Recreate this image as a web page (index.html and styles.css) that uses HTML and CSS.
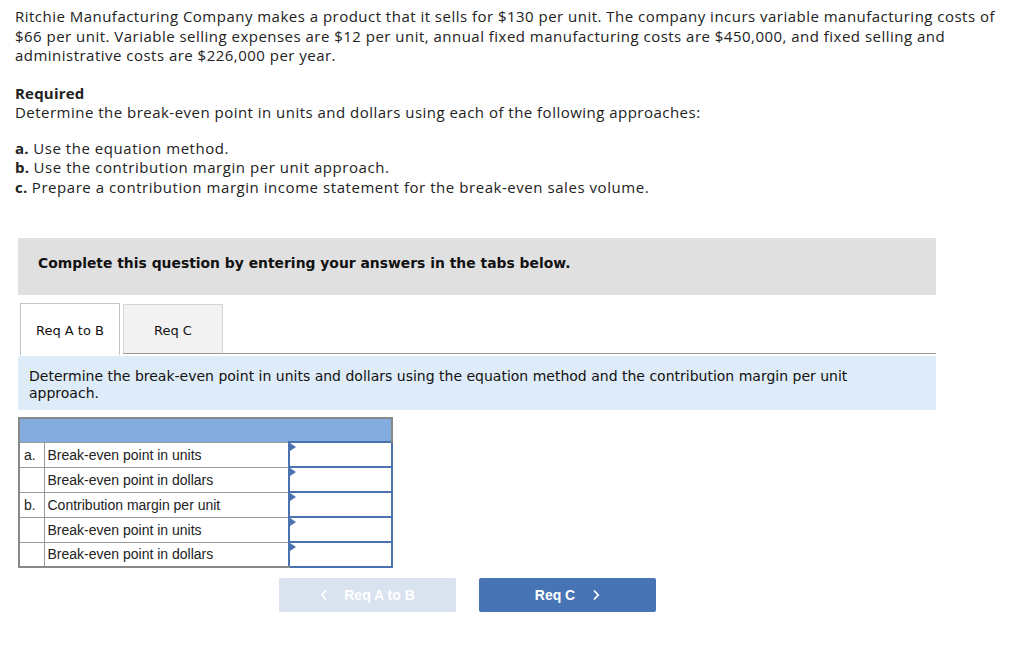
FILE: index.html
```html
<!DOCTYPE html>
<html>
<head>
<meta charset="utf-8">
<link rel="stylesheet" href="styles.css">
</head>
<body>
<div class="page">
  <p class="intro">Ritchie Manufacturing Company makes a product that it sells for $130 per unit. The company incurs variable manufacturing costs of $66 per unit. Variable selling expenses are $12 per unit, annual fixed manufacturing costs are $450,000, and fixed selling and administrative costs are $226,000 per year.</p>
  <p class="req"><b>Required</b><br>Determine the break-even point in units and dollars using each of the following approaches:</p>
  <p class="list"><b>a.</b> Use the equation method.<br><b>b.</b> Use the contribution margin per unit approach.<br><b>c.</b> Prepare a contribution margin income statement for the break-even sales volume.</p>

  <div class="banner">Complete this question by entering your answers in the tabs below.</div>

  <div class="tabs">
    <div class="tab active">Req A to B</div>
    <div class="tab">Req C</div>
    <div class="tabline"></div>
  </div>
  <div class="instr">Determine the break-even point in units and dollars using the equation method and the contribution margin per unit approach.</div>

  <table class="grid">
    <tr class="head"><td colspan="3"></td></tr>
    <tr><td class="lt">a.</td><td class="lbl">Break-even point in units</td><td class="inp"><span class="tri"></span></td></tr>
    <tr><td class="lt"></td><td class="lbl">Break-even point in dollars</td><td class="inp"><span class="tri"></span></td></tr>
    <tr><td class="lt">b.</td><td class="lbl">Contribution margin per unit</td><td class="inp"><span class="tri"></span></td></tr>
    <tr><td class="lt"></td><td class="lbl">Break-even point in units</td><td class="inp"><span class="tri"></span></td></tr>
    <tr><td class="lt"></td><td class="lbl">Break-even point in dollars</td><td class="inp"><span class="tri"></span></td></tr>
  </table>

  <div class="nav">
    <div class="btn prev"><svg class="chev" width="8" height="12" viewBox="0 0 8 12"><polyline points="6,1.5 1.8,6 6,10.5" fill="none" stroke="#fff" stroke-width="1.8"/></svg>Req A to B</div>
    <div class="btn next">Req C<svg class="chev r" width="8" height="12" viewBox="0 0 8 12"><polyline points="2,1.5 6.2,6 2,10.5" fill="none" stroke="#fff" stroke-width="1.8"/></svg></div>
  </div>
</div>
</body>
</html>
```
FILE: styles.css
```css
html, body { margin: 0; padding: 0; background: #fff; }
.page { padding: 7px 0 0 15px; font-family: "Open Sans", "Liberation Sans", sans-serif; color: #222; }
.intro, .req, .list { margin: 0; font-size: 15px; line-height: 19.5px; width: 1000px; letter-spacing: 0.48px; }
.req { margin-top: 18px; }
.list { margin-top: 16px; letter-spacing: 0.55px; }
.list b, .req b { font-weight: 700; letter-spacing: 0.2px; }
.banner {
  margin: 41px 0 0 3px; width: 918px; height: 57px; box-sizing: border-box; background: #e0e0e0;
  font-family: "DejaVu Sans", Verdana, sans-serif; font-weight: bold; font-size: 13.9px;
  padding: 0 0 8px 20px; display: flex; align-items: center; color: #111;
}
.tabs { display: flex; align-items: flex-end; margin: 8px 0 0 5px; height: 51px; width: 916px; }
.tab {
  font-family: "DejaVu Sans", Verdana, sans-serif; font-size: 13px; color: #111;
  box-sizing: border-box; width: 100px; display: flex; align-items: center; justify-content: center;
}
.tab.active { height: 52px; border: 1px solid #c4c4c4; border-bottom: none; background: #fff; margin-bottom: -1px; padding-top: 2px; }
.tab:not(.active) { height: 50px; margin-left: 3px; background: #f2f2f2; border: 1px solid #d6d6d6; border-bottom: 1px solid #999; padding-top: 2px; }
.tabline { flex: 1; border-bottom: 1px solid #999; height: 0; }
.instr {
  margin: 2px 0 0 3px; width: 918px; height: 54px; box-sizing: border-box; background: #deebf8;
  font-family: "DejaVu Sans", Verdana, sans-serif; font-size: 14px; line-height: 17px; color: #111;
  padding: 12px 20px 0 11px;
}
.grid {
  margin: 7px 0 0 3px; border-collapse: collapse; font-family: "Liberation Sans", Arial, sans-serif;
  font-size: 14px; color: #222;
}
.grid td { border: 1px solid #999; height: 25px; padding: 0; box-sizing: border-box; }
.grid .head td { background: #84abde; height: 24px; border: 2px solid #888; border-bottom: 1px solid #999; }
.grid tr:last-child td { border-bottom: 2px solid #888; }
.lt { width: 25px; padding-left: 4px !important; border-left: 2px solid #888 !important; }
.lbl { width: 245px; padding-left: 3px !important; }
.inp { width: 103px; position: relative; border: 2px solid #4a72ae !important; border-right: 2px solid #888; }
.tri { position: absolute; left: 0; top: 0; width: 0; height: 0; border-top: 4px solid transparent; border-bottom: 4px solid transparent; border-left: 6px solid #4a72ae; }
.nav { display: flex; gap: 23px; margin: 10px 0 0 264px; }
.btn {
  width: 177px; height: 34px; border-radius: 2px; color: #fff; display: flex; align-items: center; justify-content: center;
  font-family: "Liberation Sans", Arial, sans-serif; font-weight: bold; font-size: 14px;
}
.prev { background: #d9e3ef; }
.next { background: #4674b5; }
.chev { margin-right: 16px; }
.chev.r { margin: 0 0 0 17px; }
```
